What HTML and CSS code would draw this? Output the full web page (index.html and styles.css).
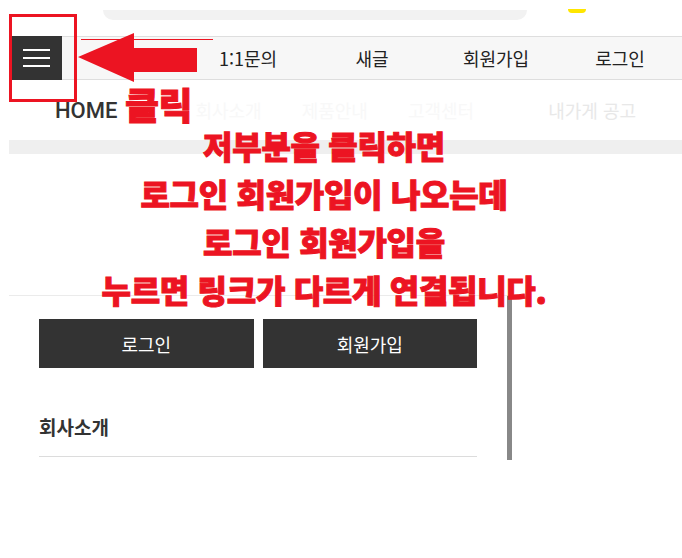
FILE: index.html
```html
<!DOCTYPE html>
<html lang="ko">
<head>
  <meta charset="UTF-8">
  <meta name="viewport" content="width=device-width, initial-scale=1.0">
  <title>메뉴 안내</title>
  <link rel="stylesheet" href="styles.css">
</head>
<body>
  <div class="page">
    <div class="top">
      <div class="search-bar"></div>
      <div class="yellow-mark"></div>
    </div>

    <div class="nav">
      <button class="menu-btn" aria-label="메뉴">
        <span></span><span></span><span></span>
      </button>
      <ul class="nav-links">
        <li></li>
        <li>1:1문의</li>
        <li>새글</li>
        <li>회원가입</li>
        <li>로그인</li>
      </ul>
    </div>

    <div class="sub-nav">
      <span class="home">HOME</span>
      <span class="faded first">회사소개</span>
      <span class="faded">제품안내</span>
      <span class="faded">고객센터</span>
      <span class="faded last">내가게 공고</span>
    </div>

    <div class="band"></div>

    <div class="spacer"></div>

    <div class="side-panel">
      <div class="panel-buttons">
        <button>로그인</button>
        <button>회원가입</button>
      </div>
      <div class="panel-item">회사소개</div>
    </div>
  </div>

  <!-- 안내용 표시 -->
  <div class="mark-box"></div>
  <div class="mark-line"></div>
  <svg class="mark-arrow" width="122" height="52" viewBox="0 0 122 52">
    <polygon points="0,24 56,0 56,15 119,15 119,39 56,39 56,49" fill="#ec1422"/>
  </svg>
  <div class="mark-click">클릭</div>
  <div class="mark-text">
    <p>저부분을 클릭하면</p>
    <p>로그인 회원가입이 나오는데</p>
    <p>로그인 회원가입을</p>
    <p>누르면 링크가 다르게 연결됩니다.</p>
  </div>
</body>
</html>
```

FILE: styles.css
```css
body, html {
  margin: 0;
  padding: 0;
  background-color: #ffffff;
  font-family: "Noto Sans CJK KR", "Noto Sans", sans-serif;
  color: #222;
}

.page {
  position: relative;
  width: 682px;
  height: 558px;
  overflow: hidden;
}

.top {
  height: 36px;
  display: flex;
  align-items: flex-start;
}

.search-bar {
  margin-top: 10px;
  margin-left: 103px;
  width: 424px;
  height: 10px;
  background-color: #f2f2f2;
  border-radius: 0 0 10px 10px;
}

.yellow-mark {
  margin-top: 9px;
  margin-left: 41px;
  width: 18px;
  height: 4px;
  background-color: #ffe600;
  border-radius: 0 0 9px 9px;
}

.nav {
  margin-left: 10px;
  height: 42px;
  display: flex;
  background-color: #f7f7f7;
  border-top: 1px solid #dedede;
  border-bottom: 1px solid #dedede;
}

.menu-btn {
  width: 52px;
  margin: -1px 0;
  padding: 0;
  border: none;
  background-color: #333;
  display: flex;
  flex-direction: column;
  justify-content: center;
  align-items: center;
  gap: 6px;
}

.menu-btn span {
  display: block;
  width: 27px;
  height: 2px;
  background-color: #fff;
}

.nav-links {
  flex: 1;
  display: flex;
  margin: 0;
  padding: 0;
  list-style: none;
}

.nav-links li {
  flex: 1;
  display: flex;
  justify-content: center;
  align-items: center;
  font-size: 18px;
  color: #222;
}

.sub-nav {
  height: 60px;
  display: flex;
  align-items: center;
  gap: 40px;
  padding-left: 55px;
}

.home {
  font-family: "Roboto", "Noto Sans", sans-serif;
  font-size: 22px;
  font-weight: 500;
  color: #333;
}

.faded {
  font-size: 18px;
  color: #f8f8f8;
}

.faded.first {
  margin-left: 38px;
}

.faded.last {
  margin-left: 34px;
  color: #e8e8e8;
}

.band {
  margin-left: 9px;
  height: 14px;
  background-color: #efefef;
}

.spacer {
  height: 141px;
}

.side-panel {
  width: 438px;
  margin-left: 9px;
  padding: 23px 30px 0;
  border-top: 1px solid #ebebeb;
  border-right: 5px solid #888;
  height: 141px;
}

.panel-buttons {
  display: flex;
  gap: 9px;
}

.panel-buttons button {
  flex: 1;
  height: 49px;
  border: none;
  background-color: #333;
  color: #fff;
  font-family: "Noto Sans CJK KR", sans-serif;
  font-size: 18px;
}

.panel-item {
  margin-top: 35px;
  height: 47px;
  padding-bottom: 6px;
  display: flex;
  align-items: center;
  border-bottom: 1px solid #dcdcdc;
  font-size: 19px;
  font-weight: 700;
  color: #333;
}

.mark-box {
  position: absolute;
  left: 9px;
  top: 14px;
  width: 62px;
  height: 82px;
  border: 3px solid #ec1422;
}

.mark-line {
  position: absolute;
  left: 81px;
  top: 39px;
  width: 132px;
  height: 1px;
  background-color: #ec1422;
}

.mark-arrow {
  position: absolute;
  left: 78px;
  top: 33px;
}

.mark-click {
  position: absolute;
  left: 125px;
  top: 79px;
  font-size: 37px;
  font-weight: 900;
  color: #ec1422;
  -webkit-text-stroke: 1px #ec1422;
  letter-spacing: -0.5px;
  line-height: 50px;
}

.mark-text {
  position: absolute;
  left: 0;
  top: 121px;
  width: 648px;
  text-align: center;
  color: #ec1422;
  font-size: 32px;
  font-weight: 900;
  -webkit-text-stroke: 1px #ec1422;
  letter-spacing: -0.3px;
}

.mark-text p {
  margin: 0;
  line-height: 48px;
}
```
